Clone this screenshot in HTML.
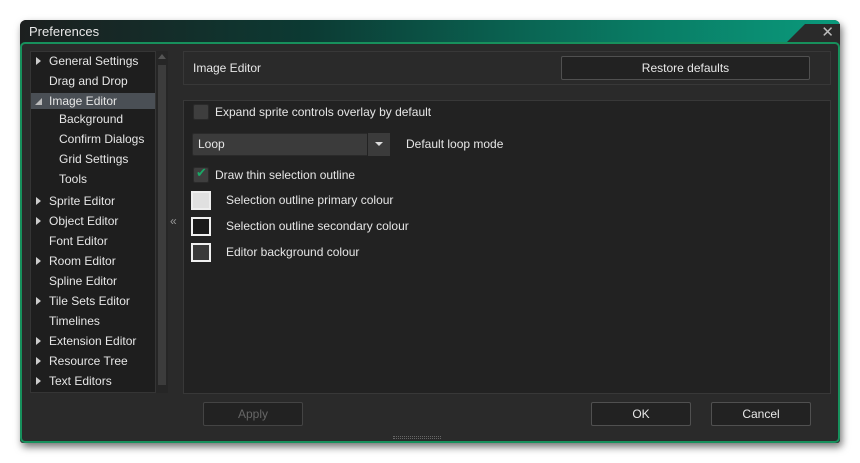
<!DOCTYPE html>
<html><head><style>
*{box-sizing:border-box;margin:0;padding:0}
body{width:860px;height:463px;background:#fff;font-family:"Liberation Sans",sans-serif;font-size:12px;color:#e0e0e0;position:relative;overflow:hidden}
.win{position:absolute;left:20px;top:20px;width:820px;height:423px;background:#2a2a2a;border-radius:6px 6px 3px 3px;box-shadow:2px 4px 8px rgba(0,0,0,.55)}
.title{position:absolute;left:0;top:0;width:820px;height:24px;border-radius:6px 6px 0 0;background:linear-gradient(90deg,#1c1f1f 0%,#0c3a33 35%,#097a63 75%,#0a9a7c 100%)}
.title span{position:absolute;left:9px;top:4px;font-size:13px;color:#e8e8e8}
.tab{position:absolute;right:0;top:4px;width:55px;height:20px;background:#2a2a2a;clip-path:polygon(20px 0,100% 0,100% 100%,0 100%)}
.x{position:absolute;right:6px;top:3px;color:#bbb;font-size:15px}
.body{position:absolute;left:0;top:22px;width:820px;height:401px;border:2px solid #17905c;border-radius:5px;background:#2a2a2a}
.tree{position:absolute;left:10px;top:31px;width:126px;height:342px;background:#1e1e1e;border:1px solid #353535}
.sb{position:absolute;left:136px;top:31px;width:12px;height:342px;background:#262626}
.sb .th{position:absolute;left:2px;top:14px;width:8px;height:320px;background:#3c3c3c}
.it{position:absolute;left:19px;height:18px;line-height:18px;font-size:12px;color:#e6e6e6;white-space:nowrap}
.arr{position:absolute;left:6px;top:5px;width:0;height:0;border-left:5px solid #ccc;border-top:4px solid transparent;border-bottom:4px solid transparent}
.sel{position:absolute;left:11px;top:73px;width:124px;height:16px;background:#4a4f55}
.pan{position:absolute;background:#252525;border:1px solid #383838}
.btn{position:absolute;height:24px;border:1px solid #505050;border-radius:2px;background:#222;text-align:center;line-height:22px;font-size:12px;color:#e8e8e8}
.cb{position:absolute;width:16px;height:16px;background:#3e3e3e;border:1px solid #2a2a2a;border-radius:2px}
.lbl{position:absolute;font-size:12px;color:#e6e6e6;white-space:nowrap}
.sw{position:absolute;width:20px;height:19px;border:2px solid #f0f0f0}
</style></head><body>
<div class="win">
<div class="title"><span>Preferences</span><div class="tab"></div><div class="x">✕</div></div>
<div class="body"></div>
<div class="tree"></div>
<div class="sel"></div>
<div class="sb"><div class="th"></div><div style="position:absolute;left:2px;top:3px;border-bottom:5px solid #555;border-left:4px solid transparent;border-right:4px solid transparent"></div></div>
<div style="position:absolute;left:10px;top:32px;width:126px">
<div class="it" style="top:0"><i class="arr" style="left:-13px"></i>General Settings</div>
<div class="it" style="top:20px">Drag and Drop</div>
<div class="it" style="top:40px"><i style="position:absolute;left:-14px;top:6px;border-bottom:7px solid #bbb;border-left:7px solid transparent"></i>Image Editor</div>
<div class="it" style="top:58px;left:29px">Background</div>
<div class="it" style="top:78px;left:29px">Confirm Dialogs</div>
<div class="it" style="top:98px;left:29px">Grid Settings</div>
<div class="it" style="top:118px;left:29px">Tools</div>
<div class="it" style="top:140px"><i class="arr" style="left:-13px"></i>Sprite Editor</div>
<div class="it" style="top:160px"><i class="arr" style="left:-13px"></i>Object Editor</div>
<div class="it" style="top:180px">Font Editor</div>
<div class="it" style="top:200px"><i class="arr" style="left:-13px"></i>Room Editor</div>
<div class="it" style="top:220px">Spline Editor</div>
<div class="it" style="top:240px"><i class="arr" style="left:-13px"></i>Tile Sets Editor</div>
<div class="it" style="top:260px">Timelines</div>
<div class="it" style="top:280px"><i class="arr" style="left:-13px"></i>Extension Editor</div>
<div class="it" style="top:300px"><i class="arr" style="left:-13px"></i>Resource Tree</div>
<div class="it" style="top:320px"><i class="arr" style="left:-13px"></i>Text Editors</div>
</div>
<div class="lbl" style="left:150px;top:194px;color:#999">«</div>
<div class="pan" style="left:163px;top:31px;width:648px;height:34px;background:#2a2a2a"></div>
<div class="lbl" style="left:173px;top:41px">Image Editor</div>
<div class="btn" style="left:541px;top:36px;width:249px">Restore defaults</div>
<div class="pan" style="left:163px;top:80px;width:648px;height:294px;background:#222"></div>
<div class="cb" style="left:173px;top:84px"></div>
<div class="lbl" style="left:195px;top:85px">Expand sprite controls overlay by default</div>
<div style="position:absolute;left:172px;top:113px;width:198px;height:23px;background:#3b3b3b;border:1px solid #2a2a2a;border-radius:2px"></div>
<div style="position:absolute;left:347px;top:113px;width:23px;height:23px;background:#3b3b3b;border-left:1px solid #222"><i style="position:absolute;left:7px;top:9px;border-top:4px solid #ddd;border-left:4px solid transparent;border-right:4px solid transparent"></i></div>
<div class="lbl" style="left:178px;top:117px">Loop</div>
<div class="lbl" style="left:386px;top:117px">Default loop mode</div>
<div class="cb" style="left:173px;top:147px"></div>
<div class="lbl" style="left:176px;top:145px;color:#1aa866;font-size:13px">✔</div>
<div class="lbl" style="left:195px;top:148px">Draw thin selection outline</div>
<div class="sw" style="left:171px;top:171px;background:#e0e0e0;border-color:#eee"></div>
<div class="lbl" style="left:206px;top:173px">Selection outline primary colour</div>
<div class="sw" style="left:171px;top:197px;background:#1a1a1a"></div>
<div class="lbl" style="left:206px;top:199px">Selection outline secondary colour</div>
<div class="sw" style="left:171px;top:223px;background:#3a3a3a"></div>
<div class="lbl" style="left:206px;top:225px">Editor background colour</div>
<div class="btn" style="left:183px;top:382px;width:100px;color:#666;border-color:#444">Apply</div>
<div class="btn" style="left:571px;top:382px;width:100px">OK</div>
<div class="btn" style="left:691px;top:382px;width:100px">Cancel</div>
<div style="position:absolute;left:373px;top:416px;width:48px;height:3px;border-top:1px dotted #666;border-bottom:1px dotted #666"></div>
</div>
</body></html>
